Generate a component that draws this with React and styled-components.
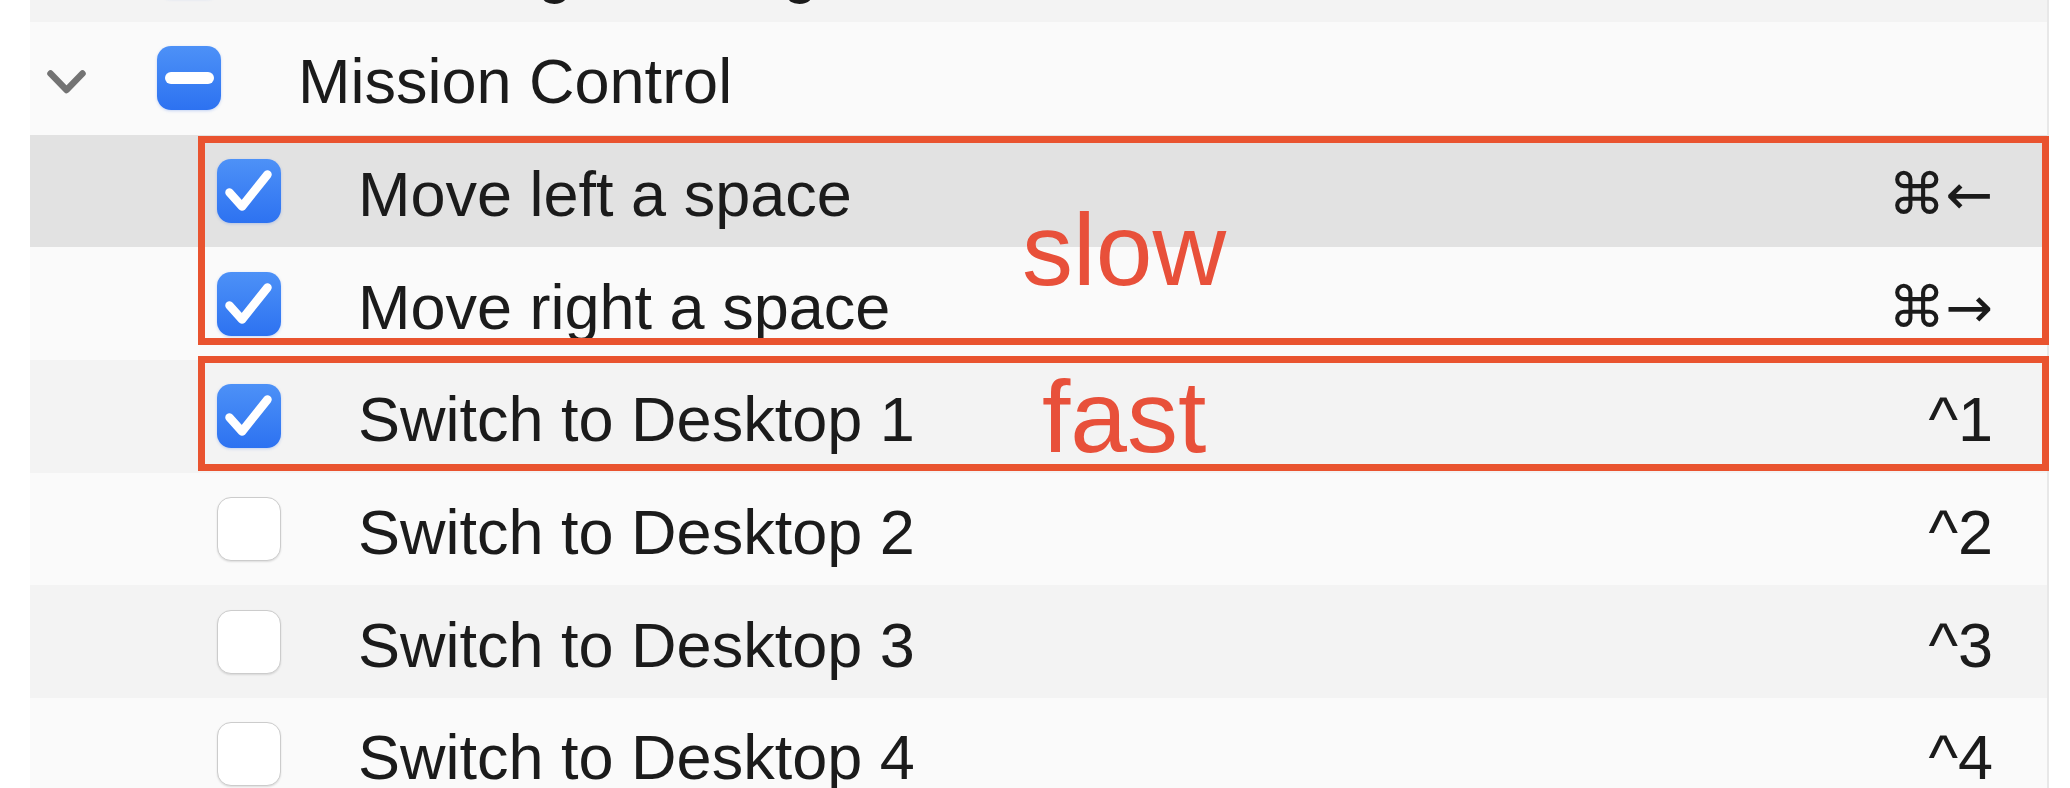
import React from "react";
import styled, {createGlobalStyle} from "styled-components";

const GlobalStyle = createGlobalStyle`
    html, body {
        margin: 0;
        padding: 0;
        background: #ffffff;
    }
    body {
        font-family: "Liberation Sans", Arial, sans-serif;
    }
`;

const rows = [
    {label: "Turn Stage Manager on/off", level: 0, state: "on"},
    {label: "Mission Control", level: 0, state: "mixed", expanded: true},
    {label: "Move left a space", level: 1, state: "on", keys: "⌘←", symbol: true, selected: true},
    {label: "Move right a space", level: 1, state: "on", keys: "⌘→", symbol: true},
    {label: "Switch to Desktop 1", level: 1, state: "on", keys: "^1"},
    {label: "Switch to Desktop 2", level: 1, state: "off", keys: "^2"},
    {label: "Switch to Desktop 3", level: 1, state: "off", keys: "^3"},
    {label: "Switch to Desktop 4", level: 1, state: "off", keys: "^4"},
];

function Chevron() {
    return (
        <svg width="39" height="24" viewBox="0 0 39 24">
            <polyline points="3.5,3.5 19.5,20 35.5,3.5" fill="none" stroke="#737373" strokeWidth="6.5"
                      strokeLinecap="round" strokeLinejoin="round"/>
        </svg>
    )
}

function Check({state}) {
    return (
        <CheckBox $state={state}>
            {state === "on" && (
                <svg width="64" height="64" viewBox="0 0 64 64">
                    <polyline points="12.5,33.5 25,47.5 50.5,15.5" fill="none" stroke="#ffffff" strokeWidth="8.5"
                              strokeLinecap="round" strokeLinejoin="round"/>
                </svg>
            )}
            {state === "mixed" && <Dash/>}
        </CheckBox>
    )
}

function App() {
    return (
        <Page>
            <GlobalStyle/>
            <List>
                {rows.map((row, i) => (
                    <Row key={row.label} $level={row.level} $striped={i % 2 === 0} $selected={row.selected}>
                        <Disclosure>{row.expanded && <Chevron/>}</Disclosure>
                        <Check state={row.state}/>
                        <Label>{row.label}</Label>
                        {row.keys && <Keys $symbol={row.symbol}>{row.keys}</Keys>}
                    </Row>
                ))}
            </List>
            <Frame $top={136} $height={209}/>
            <Frame $top={356} $height={115}/>
            <Note $top={199} $left={1022}>slow</Note>
            <Note $top={366} $left={1042}>fast</Note>
        </Page>
    )
}

const Page = styled.div`
    position: relative;
    height: 788px;
    overflow: hidden;
    padding-left: 30px;
    box-sizing: border-box;
    display: flex;
`;

const List = styled.div`
    width: 2017px;
    margin-top: -90.67px;
    border-right: 2px solid #e8e8e8;
    display: flex;
    flex-direction: column;
`;

const Row = styled.div`
    height: 112.67px;
    flex-shrink: 0;
    display: flex;
    align-items: center;
    padding-left: ${p => 17 + p.$level * 60}px;
    padding-right: 54px;
    box-sizing: border-box;
    background: ${p => p.$selected ? "#e2e2e2" : p.$striped ? "#f3f3f3" : "#fafafa"};
`;

const Disclosure = styled.div`
    width: 110px;
    flex-shrink: 0;
    display: flex;
    align-items: center;
    svg {
        display: block;
        margin-top: 8px;
    }
`;

const CheckBox = styled.div`
    width: 64px;
    height: 64px;
    flex-shrink: 0;
    box-sizing: border-box;
    border-radius: 14px;
    display: flex;
    align-items: center;
    justify-content: center;
    background: ${p => p.$state === "off" ? "#ffffff" : "linear-gradient(#4d91f7, #2d72f1)"};
    border: ${p => p.$state === "off" ? "1.5px solid #cccccc" : "none"};
    box-shadow: ${p => p.$state === "off" ? "0 1px 2px rgba(0,0,0,0.12)" : "0 1px 3px rgba(40,100,230,0.25)"};
    svg {
        display: block;
    }
`;

const Dash = styled.div`
    width: 49px;
    height: 12px;
    border-radius: 6px;
    background: #ffffff;
`;

const Label = styled.div`
    flex: 1;
    margin-left: 77px;
    margin-top: 6px;
    font-size: 63px;
    color: #1b1b1b;
    white-space: nowrap;
`;

const Keys = styled.div`
    margin-top: 6px;
    font-family: ${p => p.$symbol ? '"DejaVu Sans", sans-serif' : '"Liberation Sans", Arial, sans-serif'};
    font-size: ${p => p.$symbol ? 57 : 63}px;
    color: #1b1b1b;
    white-space: nowrap;
`;

const Frame = styled.div`
    position: absolute;
    left: 198px;
    top: ${p => p.$top}px;
    width: 1851px;
    height: ${p => p.$height}px;
    border: 7px solid #e9532f;
    box-sizing: border-box;
    pointer-events: none;
`;

const Note = styled.div`
    position: absolute;
    top: ${p => p.$top}px;
    left: ${p => p.$left}px;
    font-family: "Liberation Sans", Arial, sans-serif;
    font-size: 102px;
    line-height: 1;
    color: #e8503a;
`;

export default App;
